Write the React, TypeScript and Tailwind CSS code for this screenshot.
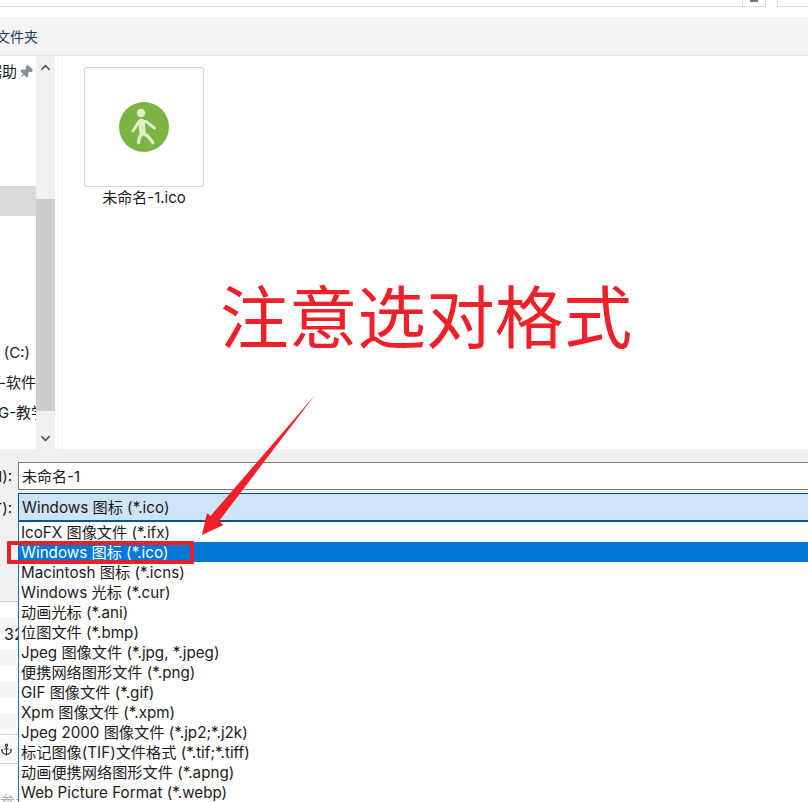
import React from 'react';
import { Anchor, ChevronDown, ChevronUp, Pin } from 'lucide-react';

const FORMATS = [
  'IcoFX 图像文件 (*.ifx)',
  'Windows 图标 (*.ico)',
  'Macintosh 图标 (*.icns)',
  'Windows 光标 (*.cur)',
  '动画光标 (*.ani)',
  '位图文件 (*.bmp)',
  'Jpeg 图像文件 (*.jpg, *.jpeg)',
  '便携网络图形文件 (*.png)',
  'GIF 图像文件 (*.gif)',
  'Xpm 图像文件 (*.xpm)',
  'Jpeg 2000 图像文件 (*.jp2;*.j2k)',
  '标记图像(TIF)文件格式 (*.tif;*.tiff)',
  '动画便携网络图形文件 (*.apng)',
  'Web Picture Format (*.webp)',
];

const SideRow = ({ children, selected, start }: { children?: React.ReactNode; selected?: boolean; start?: boolean }) => (
  <div className={`h-[30px] pt-[2px] flex items-center overflow-hidden whitespace-nowrap ${start ? 'justify-start' : 'justify-end'} ${selected ? 'bg-[#d9d9d9]' : ''}`}>
    {children}
  </div>
);

const WalkerIcon = () => (
  <svg width="50" height="50" viewBox="0 0 50 50">
    <circle cx="25" cy="25" r="25" fill="#7cb342" />
    <circle cx="22" cy="11" r="4.2" fill="#dcedc8" />
    <path d="M14 29 L20 19.5 L27 19.5 L35.5 26" fill="none" stroke="#dcedc8" strokeWidth="3" strokeLinecap="round" strokeLinejoin="round" />
    <path d="M22.5 20 L23.5 30" fill="none" stroke="#dcedc8" strokeWidth="6.5" strokeLinecap="round" />
    <path d="M19.5 40.5 L20.5 35 L23.5 31 L28.5 34 L34 40.5" fill="none" stroke="#dcedc8" strokeWidth="3.4" strokeLinecap="round" strokeLinejoin="round" />
  </svg>
);

export default function App() {
  return (
    <div className="relative w-[808px] h-[802px] overflow-hidden bg-white text-[15px] leading-5 text-[#1a1a1a] font-['Inter','Noto_Sans_CJK_SC',sans-serif]">
      {/* address bar, cut off by the crop */}
      <div className="h-[17px] flex items-start">
        <div className="w-[116px] h-[7px] border-b border-[#d9d9d9] overflow-hidden shrink-0">
          <div className="mt-[-17px] pl-[44px] text-[#555] text-[14px]">图片管</div>
        </div>
        <div className="w-[626px] h-[7px] border-b border-[#d9d9d9] overflow-hidden shrink-0">
          <div className="mt-[-17px] text-[#555] text-[14px]">图片</div>
        </div>
        <div className="w-[24px] h-[7px] border-x border-b border-[#d9d9d9] flex justify-center shrink-0">
          <div className="w-[8px] h-[2px] bg-[#777]" />
        </div>
        <div className="ml-[11px] flex-1 h-[7px] border-l border-b border-[#d9d9d9]" />
      </div>

      {/* toolbar */}
      <div className="h-[39px] pt-[2px] bg-[#f4f5f7] border-b border-[#e5e5e5] flex items-center">
        <div className="w-[38px] flex justify-end overflow-hidden whitespace-nowrap text-[14px] text-[#1e395b]">新建文件夹</div>
      </div>

      {/* browser */}
      <div className="h-[393px] flex">
        <div className="w-[36px] shrink-0 overflow-hidden">
          <SideRow>
            <span>据助</span>
            <Pin size={14} className="ml-[2px] mr-[3px] text-[#8a8f96] fill-[#8a8f96] rotate-45 shrink-0" />
          </SideRow>
          <SideRow />
          <SideRow />
          <div className="h-[40px]" />
          <SideRow selected />
          <div className="h-[121px]" />
          <SideRow><span className="pr-[6px]">(C:)</span></SideRow>
          <SideRow><span>-软件</span></SideRow>
          <SideRow start><span className="ml-[-2px]">G-教学</span></SideRow>
        </div>
        <div className="w-[19px] shrink-0 bg-[#f0f0f0] flex flex-col items-center">
          <div className="h-[23px] flex items-center"><ChevronUp size={15} strokeWidth={2.4} className="text-[#555]" /></div>
          <div className="h-[120px]" />
          <div className="w-full h-[212px] bg-[#cdcdcd]" />
          <div className="flex-1 flex items-end pb-[3px]"><ChevronDown size={15} strokeWidth={2.4} className="text-[#555]" /></div>
        </div>
        <div className="w-[3px] shrink-0 border-r border-[#f0f0f0]" />
        <div className="flex-1 pl-[26px] pt-[11px]">
          <div className="w-[120px]">
            <div className="w-[120px] h-[120px] border border-[#d4d4d4] rounded-[2px] flex items-center justify-center">
              <WalkerIcon />
            </div>
            <div className="mt-[1px] text-center whitespace-nowrap">未命名-1.ico</div>
          </div>
        </div>
      </div>

      {/* save form */}
      <div className="h-[353px] flex bg-[#f0f0f0]">
        <div className="w-[18px] shrink-0 flex flex-col overflow-hidden">
          <div className="h-[13px]" />
          <div className="h-[28px] pt-[2px] flex items-center justify-end whitespace-nowrap pr-[6px]">N):</div>
          <div className="h-[3px]" />
          <div className="h-[29px] pt-[2px] flex items-center justify-end whitespace-nowrap pr-[6px]">T):</div>
          <div className="h-[79px]" />
          <div className="h-[133px] border-t border-[#d0d0d0] bg-[repeating-conic-gradient(#f5f5f5_0_25%,#ffffff_0_50%)] bg-[length:32px_32px] pl-[4px] pt-[22px] text-[16px] whitespace-nowrap">32</div>
          <div className="h-[30px] border-t border-b border-[#d8d8d8] bg-[#fafafa] flex items-center">
            <Anchor size={13} className="text-[#333]" />
          </div>
          <div className="flex-1 bg-white flex items-end overflow-hidden">
            <span className="text-[#b0b0b0] mb-[-10px] whitespace-nowrap">参考</span>
          </div>
        </div>
        <div className="flex-1 min-w-0 flex flex-col">
          <div className="h-[13px]" />
          <div className="h-[28px] pt-[2px] bg-white border border-r-0 border-[#7a7a7a] flex items-center pl-[3px]">未命名-1</div>
          <div className="h-[3px]" />
          <div className="h-[29px] pt-[2px] bg-[#cce4f7] border border-r-0 border-b-2 border-[#005499] flex items-center pl-[3px] text-[15.2px]">Windows 图标 (*.ico)</div>
          <div className="flex-1 bg-white border-l border-[#0078d7] text-[15.2px]">
            {FORMATS.map((f, i) => (
              <div key={f} className={`h-[20px] pl-[2px] pt-[2px] flex items-center whitespace-nowrap ${i === 1 ? 'bg-[#0078d7] text-white' : ''}`}>
                {f}
              </div>
            ))}
          </div>
        </div>
      </div>

      {/* annotations drawn over the dialog */}
      <div className="absolute left-[220px] top-[268px] text-[68.7px] leading-[100px] text-[#ee2029] whitespace-nowrap">注意选对格式</div>
      <div className="absolute left-[7px] top-[541px] w-[187px] h-[23px] border-[4px] border-[#e8202a] rounded-[1px]" />
      <svg className="absolute left-[195px] top-[390px]" width="125" height="150" viewBox="195 390 125 150">
        <polygon points="315,395 219,521 223.5,525 202,535 207,513 210.5,516" fill="#ee2029" />
      </svg>
    </div>
  );
}
